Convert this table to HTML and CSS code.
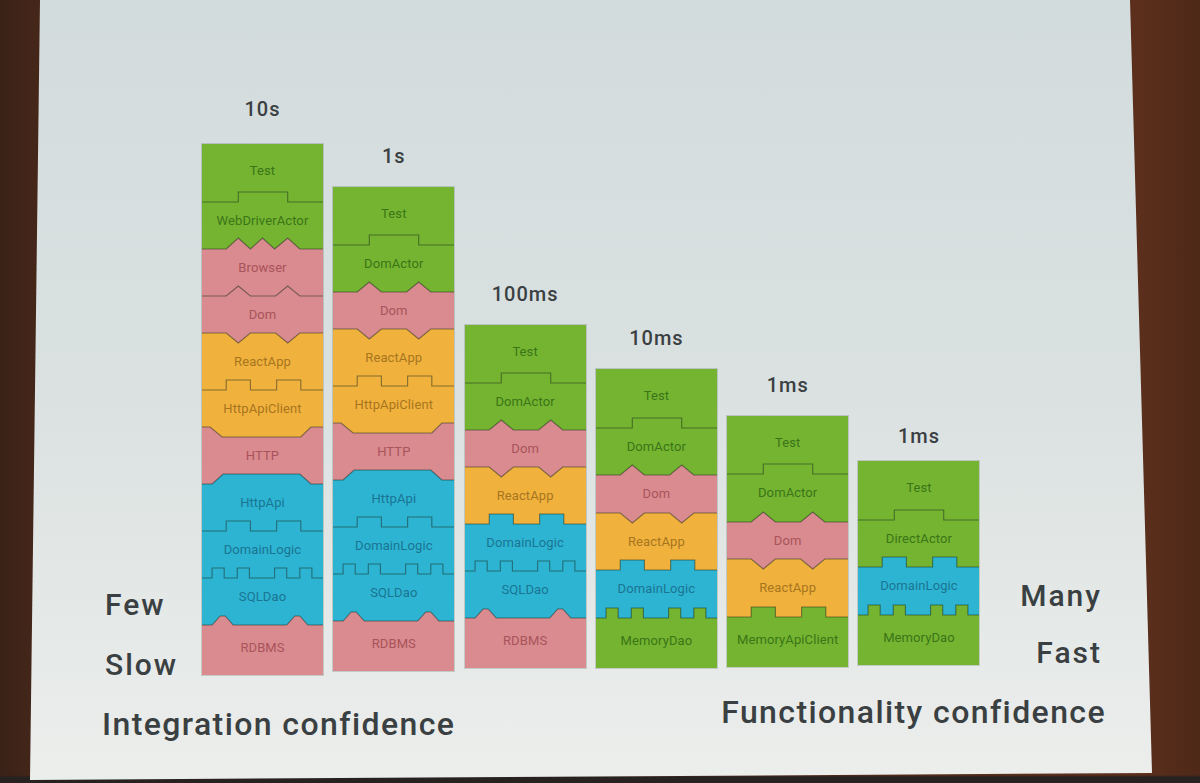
FILE: index.html
```html
<!DOCTYPE html>
<html lang="en">
<head>
<meta charset="utf-8">
<title>Test layers</title>
<link rel="stylesheet" href="styles.css">
</head>
<body>
<div class="slide">
  <div class="stage">
    <div class="side-left">
      <div class="big">Few</div>
      <div class="big">Slow</div>
    </div>
    <div class="cols">
      <!-- column 1 -->
      <div class="col c1">
        <div class="time">10s</div>
        <div class="stack">
          <div class="layer g"><span>Test</span></div>
          <div class="layer g"><svg class="cn" viewBox="0 0 120 12" preserveAspectRatio="none"><polyline class="ln" points="0,11 36,11 36,1 85,1 85,11 120,11"/></svg><span>WebDriverActor</span></div>
          <div class="layer p"><svg class="cn" viewBox="0 0 120 12" preserveAspectRatio="none"><rect class="fg" x="0" y="-1" width="120" height="14"/><polygon class="fp" points="0,11 24,11 36,0 48,11 60,0 72,11 85,0 97,11 120,11 120,13 0,13"/><polyline class="ln" points="0,11 24,11 36,0 48,11 60,0 72,11 85,0 97,11 120,11"/></svg><span>Browser</span></div>
          <div class="layer p"><svg class="cn" viewBox="0 0 120 12" preserveAspectRatio="none"><polyline class="ln" points="0,11 24,11 36,1 48,11 73,11 85,1 97,11 120,11"/></svg><span>Dom</span></div>
          <div class="layer o"><svg class="cn" viewBox="0 0 120 12" preserveAspectRatio="none"><rect class="fp" x="0" y="-1" width="120" height="14"/><polygon class="fo" points="0,1 24,1 36,11 48,1 73,1 85,11 97,1 120,1 120,13 0,13"/><polyline class="ln" points="0,1 24,1 36,11 48,1 73,1 85,11 97,1 120,1"/></svg><span>ReactApp</span></div>
          <div class="layer o"><svg class="cn" viewBox="0 0 120 12" preserveAspectRatio="none"><polyline class="ln" points="0,11 24,11 24,1 48,1 48,11 74,11 74,1 98,1 98,11 120,11"/></svg><span>HttpApiClient</span></div>
          <div class="layer p"><svg class="cn" viewBox="0 0 120 12" preserveAspectRatio="none"><rect class="fo" x="0" y="-1" width="120" height="14"/><polygon class="fp" points="0,1 8,1 20,11 98,11 108,1 120,1 120,13 0,13"/><polyline class="ln" points="0,1 8,1 20,11 98,11 108,1 120,1"/></svg><span>HTTP</span></div>
          <div class="layer b"><svg class="cn" viewBox="0 0 120 12" preserveAspectRatio="none"><rect class="fp" x="0" y="-1" width="120" height="14"/><polygon class="fb" points="0,11 10,11 21,1 97,1 108,11 120,11 120,13 0,13"/><polyline class="ln" points="0,11 10,11 21,1 97,1 108,11 120,11"/></svg><span>HttpApi</span></div>
          <div class="layer b"><svg class="cn" viewBox="0 0 120 12" preserveAspectRatio="none"><polyline class="ln" points="0,11 24,11 24,1 48,1 48,11 74,11 74,1 98,1 98,11 120,11"/></svg><span>DomainLogic</span></div>
          <div class="layer b"><svg class="cn" viewBox="0 0 120 12" preserveAspectRatio="none"><polyline class="ln" points="0,11 10,11 10,1 22,1 22,11 35,11 35,1 47,1 47,11 72,11 72,1 84,1 84,11 97,11 97,1 109,1 109,11 120,11"/></svg><span>SQLDao</span></div>
          <div class="layer p"><svg class="cn" viewBox="0 0 120 12" preserveAspectRatio="none"><rect class="fb" x="0" y="-1" width="120" height="14"/><polygon class="fp" points="0,11 10,11 18,2 23,2 31,11 84,11 92,2 97,2 105,11 120,11 120,13 0,13"/><polyline class="ln" points="0,11 10,11 18,2 23,2 31,11 84,11 92,2 97,2 105,11 120,11"/></svg><span>RDBMS</span></div>
        </div>
      </div>
      <!-- column 2 -->
      <div class="col c2">
        <div class="time">1s</div>
        <div class="stack">
          <div class="layer g"><span>Test</span></div>
          <div class="layer g"><svg class="cn" viewBox="0 0 120 12" preserveAspectRatio="none"><polyline class="ln" points="0,11 36,11 36,1 85,1 85,11 120,11"/></svg><span>DomActor</span></div>
          <div class="layer p"><svg class="cn" viewBox="0 0 120 12" preserveAspectRatio="none"><rect class="fg" x="0" y="-1" width="120" height="14"/><polygon class="fp" points="0,11 24,11 36,1 48,11 73,11 85,1 97,11 120,11 120,13 0,13"/><polyline class="ln" points="0,11 24,11 36,1 48,11 73,11 85,1 97,11 120,11"/></svg><span>Dom</span></div>
          <div class="layer o"><svg class="cn" viewBox="0 0 120 12" preserveAspectRatio="none"><rect class="fp" x="0" y="-1" width="120" height="14"/><polygon class="fo" points="0,1 24,1 36,11 48,1 73,1 85,11 97,1 120,1 120,13 0,13"/><polyline class="ln" points="0,1 24,1 36,11 48,1 73,1 85,11 97,1 120,1"/></svg><span>ReactApp</span></div>
          <div class="layer o"><svg class="cn" viewBox="0 0 120 12" preserveAspectRatio="none"><polyline class="ln" points="0,11 24,11 24,1 48,1 48,11 74,11 74,1 98,1 98,11 120,11"/></svg><span>HttpApiClient</span></div>
          <div class="layer p"><svg class="cn" viewBox="0 0 120 12" preserveAspectRatio="none"><rect class="fo" x="0" y="-1" width="120" height="14"/><polygon class="fp" points="0,1 8,1 20,11 98,11 108,1 120,1 120,13 0,13"/><polyline class="ln" points="0,1 8,1 20,11 98,11 108,1 120,1"/></svg><span>HTTP</span></div>
          <div class="layer b"><svg class="cn" viewBox="0 0 120 12" preserveAspectRatio="none"><rect class="fp" x="0" y="-1" width="120" height="14"/><polygon class="fb" points="0,11 10,11 21,1 97,1 108,11 120,11 120,13 0,13"/><polyline class="ln" points="0,11 10,11 21,1 97,1 108,11 120,11"/></svg><span>HttpApi</span></div>
          <div class="layer b"><svg class="cn" viewBox="0 0 120 12" preserveAspectRatio="none"><polyline class="ln" points="0,11 24,11 24,1 48,1 48,11 74,11 74,1 98,1 98,11 120,11"/></svg><span>DomainLogic</span></div>
          <div class="layer b"><svg class="cn" viewBox="0 0 120 12" preserveAspectRatio="none"><polyline class="ln" points="0,11 10,11 10,1 22,1 22,11 35,11 35,1 47,1 47,11 72,11 72,1 84,1 84,11 97,11 97,1 109,1 109,11 120,11"/></svg><span>SQLDao</span></div>
          <div class="layer p"><svg class="cn" viewBox="0 0 120 12" preserveAspectRatio="none"><rect class="fb" x="0" y="-1" width="120" height="14"/><polygon class="fp" points="0,11 10,11 18,2 23,2 31,11 84,11 92,2 97,2 105,11 120,11 120,13 0,13"/><polyline class="ln" points="0,11 10,11 18,2 23,2 31,11 84,11 92,2 97,2 105,11 120,11"/></svg><span>RDBMS</span></div>
        </div>
      </div>
      <!-- column 3 -->
      <div class="col c3">
        <div class="time">100ms</div>
        <div class="stack">
          <div class="layer g"><span>Test</span></div>
          <div class="layer g"><svg class="cn" viewBox="0 0 120 12" preserveAspectRatio="none"><polyline class="ln" points="0,11 36,11 36,1 85,1 85,11 120,11"/></svg><span>DomActor</span></div>
          <div class="layer p"><svg class="cn" viewBox="0 0 120 12" preserveAspectRatio="none"><rect class="fg" x="0" y="-1" width="120" height="14"/><polygon class="fp" points="0,11 24,11 36,1 48,11 73,11 85,1 97,11 120,11 120,13 0,13"/><polyline class="ln" points="0,11 24,11 36,1 48,11 73,11 85,1 97,11 120,11"/></svg><span>Dom</span></div>
          <div class="layer o"><svg class="cn" viewBox="0 0 120 12" preserveAspectRatio="none"><rect class="fp" x="0" y="-1" width="120" height="14"/><polygon class="fo" points="0,1 24,1 36,11 48,1 73,1 85,11 97,1 120,1 120,13 0,13"/><polyline class="ln" points="0,1 24,1 36,11 48,1 73,1 85,11 97,1 120,1"/></svg><span>ReactApp</span></div>
          <div class="layer b"><svg class="cn" viewBox="0 0 120 12" preserveAspectRatio="none"><rect class="fo" x="0" y="-1" width="120" height="14"/><polygon class="fb" points="0,11 24,11 24,1 48,1 48,11 74,11 74,1 98,1 98,11 120,11 120,13 0,13"/><polyline class="ln" points="0,11 24,11 24,1 48,1 48,11 74,11 74,1 98,1 98,11 120,11"/></svg><span>DomainLogic</span></div>
          <div class="layer b"><svg class="cn" viewBox="0 0 120 12" preserveAspectRatio="none"><polyline class="ln" points="0,11 10,11 10,1 22,1 22,11 35,11 35,1 47,1 47,11 72,11 72,1 84,1 84,11 97,11 97,1 109,1 109,11 120,11"/></svg><span>SQLDao</span></div>
          <div class="layer p"><svg class="cn" viewBox="0 0 120 12" preserveAspectRatio="none"><rect class="fb" x="0" y="-1" width="120" height="14"/><polygon class="fp" points="0,11 10,11 18,2 23,2 31,11 84,11 92,2 97,2 105,11 120,11 120,13 0,13"/><polyline class="ln" points="0,11 10,11 18,2 23,2 31,11 84,11 92,2 97,2 105,11 120,11"/></svg><span>RDBMS</span></div>
        </div>
      </div>
      <!-- column 4 -->
      <div class="col c4">
        <div class="time">10ms</div>
        <div class="stack">
          <div class="layer g"><span>Test</span></div>
          <div class="layer g"><svg class="cn" viewBox="0 0 120 12" preserveAspectRatio="none"><polyline class="ln" points="0,11 36,11 36,1 85,1 85,11 120,11"/></svg><span>DomActor</span></div>
          <div class="layer p"><svg class="cn" viewBox="0 0 120 12" preserveAspectRatio="none"><rect class="fg" x="0" y="-1" width="120" height="14"/><polygon class="fp" points="0,11 24,11 36,1 48,11 73,11 85,1 97,11 120,11 120,13 0,13"/><polyline class="ln" points="0,11 24,11 36,1 48,11 73,11 85,1 97,11 120,11"/></svg><span>Dom</span></div>
          <div class="layer o"><svg class="cn" viewBox="0 0 120 12" preserveAspectRatio="none"><rect class="fp" x="0" y="-1" width="120" height="14"/><polygon class="fo" points="0,1 24,1 36,11 48,1 73,1 85,11 97,1 120,1 120,13 0,13"/><polyline class="ln" points="0,1 24,1 36,11 48,1 73,1 85,11 97,1 120,1"/></svg><span>ReactApp</span></div>
          <div class="layer b"><svg class="cn" viewBox="0 0 120 12" preserveAspectRatio="none"><rect class="fo" x="0" y="-1" width="120" height="14"/><polygon class="fb" points="0,11 24,11 24,1 48,1 48,11 74,11 74,1 98,1 98,11 120,11 120,13 0,13"/><polyline class="ln" points="0,11 24,11 24,1 48,1 48,11 74,11 74,1 98,1 98,11 120,11"/></svg><span>DomainLogic</span></div>
          <div class="layer g"><svg class="cn" viewBox="0 0 120 12" preserveAspectRatio="none"><rect class="fb" x="0" y="-1" width="120" height="14"/><polygon class="fg" points="0,11 10,11 10,1 22,1 22,11 35,11 35,1 47,1 47,11 72,11 72,1 84,1 84,11 97,11 97,1 109,1 109,11 120,11 120,13 0,13"/><polyline class="ln" points="0,11 10,11 10,1 22,1 22,11 35,11 35,1 47,1 47,11 72,11 72,1 84,1 84,11 97,11 97,1 109,1 109,11 120,11"/></svg><span>MemoryDao</span></div>
        </div>
      </div>
      <!-- column 5 -->
      <div class="col c5">
        <div class="time">1ms</div>
        <div class="stack">
          <div class="layer g"><span>Test</span></div>
          <div class="layer g"><svg class="cn" viewBox="0 0 120 12" preserveAspectRatio="none"><polyline class="ln" points="0,11 36,11 36,1 85,1 85,11 120,11"/></svg><span>DomActor</span></div>
          <div class="layer p"><svg class="cn" viewBox="0 0 120 12" preserveAspectRatio="none"><rect class="fg" x="0" y="-1" width="120" height="14"/><polygon class="fp" points="0,11 24,11 36,1 48,11 73,11 85,1 97,11 120,11 120,13 0,13"/><polyline class="ln" points="0,11 24,11 36,1 48,11 73,11 85,1 97,11 120,11"/></svg><span>Dom</span></div>
          <div class="layer o"><svg class="cn" viewBox="0 0 120 12" preserveAspectRatio="none"><rect class="fp" x="0" y="-1" width="120" height="14"/><polygon class="fo" points="0,1 24,1 36,11 48,1 73,1 85,11 97,1 120,1 120,13 0,13"/><polyline class="ln" points="0,1 24,1 36,11 48,1 73,1 85,11 97,1 120,1"/></svg><span>ReactApp</span></div>
          <div class="layer g"><svg class="cn" viewBox="0 0 120 12" preserveAspectRatio="none"><rect class="fo" x="0" y="-1" width="120" height="14"/><polygon class="fg" points="0,11 24,11 24,1 48,1 48,11 74,11 74,1 98,1 98,11 120,11 120,13 0,13"/><polyline class="ln" points="0,11 24,11 24,1 48,1 48,11 74,11 74,1 98,1 98,11 120,11"/></svg><span>MemoryApiClient</span></div>
        </div>
      </div>
      <!-- column 6 -->
      <div class="col c6">
        <div class="time">1ms</div>
        <div class="stack">
          <div class="layer g"><span>Test</span></div>
          <div class="layer g"><svg class="cn" viewBox="0 0 120 12" preserveAspectRatio="none"><polyline class="ln" points="0,11 36,11 36,1 85,1 85,11 120,11"/></svg><span>DirectActor</span></div>
          <div class="layer b"><svg class="cn" viewBox="0 0 120 12" preserveAspectRatio="none"><rect class="fg" x="0" y="-1" width="120" height="14"/><polygon class="fb" points="0,11 24,11 24,1 48,1 48,11 74,11 74,1 98,1 98,11 120,11 120,13 0,13"/><polyline class="ln" points="0,11 24,11 24,1 48,1 48,11 74,11 74,1 98,1 98,11 120,11"/></svg><span>DomainLogic</span></div>
          <div class="layer g"><svg class="cn" viewBox="0 0 120 12" preserveAspectRatio="none"><rect class="fb" x="0" y="-1" width="120" height="14"/><polygon class="fg" points="0,11 10,11 10,1 22,1 22,11 35,11 35,1 47,1 47,11 72,11 72,1 84,1 84,11 97,11 97,1 109,1 109,11 120,11 120,13 0,13"/><polyline class="ln" points="0,11 10,11 10,1 22,1 22,11 35,11 35,1 47,1 47,11 72,11 72,1 84,1 84,11 97,11 97,1 109,1 109,11 120,11"/></svg><span>MemoryDao</span></div>
        </div>
      </div>
    </div>
    <div class="side-right">
      <div class="big many">Many</div>
      <div class="big fast">Fast</div>
    </div>
  </div>
  <div class="footer">
    <div class="conf integ">Integration confidence</div>
    <div class="conf func">Functionality confidence</div>
  </div>
</div>
</body>
</html>
```

FILE: styles.css
```css
html, body {
  margin: 0;
  padding: 0;
}

body {
  width: 1200px;
  height: 783px;
  overflow: hidden;
  font-family: "Roboto", "Open Sans", "Liberation Sans", sans-serif;
  background:
    linear-gradient(to bottom, rgba(0,0,0,0) 775px, #27221f 777px),
    linear-gradient(90deg, #3a2117 0%, #45271a 3%, #5b2f1c 95%, #4e2818 100%);
}

.slide {
  margin-left: 30px;
  width: 1122px;
  height: 780px;
  box-sizing: border-box;
  padding-left: 72px;
  clip-path: polygon(10px 0, 1100px 0, 1122px 773px, 0 780px);
  background: linear-gradient(180deg, #d3dcdd 0%, #d9e0e0 45%, #e5e9e7 80%, #eceeec 100%);
  color: #3a4042;
}

/* ---------- chart row ---------- */
.stage {
  display: flex;
  align-items: flex-end;
  height: 695px;
}

.side-left {
  width: 100px;
  padding-left: 3px;
  box-sizing: border-box;
}

.big {
  font-size: 30px;
  font-weight: 500;
  letter-spacing: 2px;
  line-height: 60px;
}

.side-right {
  flex: 1;
  text-align: right;
  padding-right: 50px;
  margin-bottom: 14px;
}

.side-right .big {
  line-height: 57px;
}

.cols {
  display: flex;
  align-items: flex-end;
  gap: 10.3px;
}

.col {
  width: 121px;
  display: flex;
  flex-direction: column;
  align-items: stretch;
}

.time {
  text-align: center;
  font-size: 20px;
  font-weight: 500;
  letter-spacing: 1px;
  line-height: 24px;
  margin-bottom: 19px;
  color: #3a4042;
}

.c1 { --h: 47px; margin-bottom: 20px; }
.c2 { --h: 47px; margin-bottom: 24px; }
.c3 { --h: 47px; margin-bottom: 27px; }
.c4 { --h: 47.5px; margin-bottom: 27px; }
.c5 { --h: 47.5px; margin-bottom: 28px; }
.c6 { --h: 47.5px; margin-bottom: 30px; }

.c1 .time { margin-bottom: 23px; }
.c6 .time { margin-bottom: 13px; }

.stack {
  display: flex;
  flex-direction: column;
  box-shadow: 0 0 0 1px rgba(40, 60, 40, 0.18);
}

.layer {
  position: relative;
  height: var(--h);
  display: flex;
  align-items: center;
  justify-content: center;
  font-size: 13px;
  letter-spacing: 0.1px;
}

.layer:first-child { height: calc(var(--h) + 6px); }
.layer:last-child { height: calc(var(--h) + 8px); }

.layer span {
  position: relative;
  z-index: 2;
}

.g { background: #74b430; color: #3b7419; }
.p { background: #d98b8f; color: #a9535b; }
.o { background: #f0b23d; color: #a8751f; }
.b { background: #2cb4d2; color: #1b7592; }

.cn {
  position: absolute;
  left: 0;
  top: -6px;
  width: 100%;
  height: 12px;
  overflow: visible;
  z-index: 1;
}

.fg { fill: #74b430; }
.fp { fill: #d98b8f; }
.fo { fill: #f0b23d; }
.fb { fill: #2cb4d2; }

.ln {
  fill: none;
  stroke: rgba(25, 40, 30, 0.5);
  stroke-width: 1.1;
  vector-effect: non-scaling-stroke;
}

/* ---------- bottom row ---------- */
.footer {
  display: flex;
  justify-content: space-between;
  align-items: flex-start;
  margin-top: -3px;
  padding-right: 46px;
}

.conf {
  font-size: 32px;
  font-weight: 500;
  letter-spacing: 1.4px;
  line-height: 40px;
  white-space: nowrap;
}

.integ {
  padding-top: 12px;
}
```
